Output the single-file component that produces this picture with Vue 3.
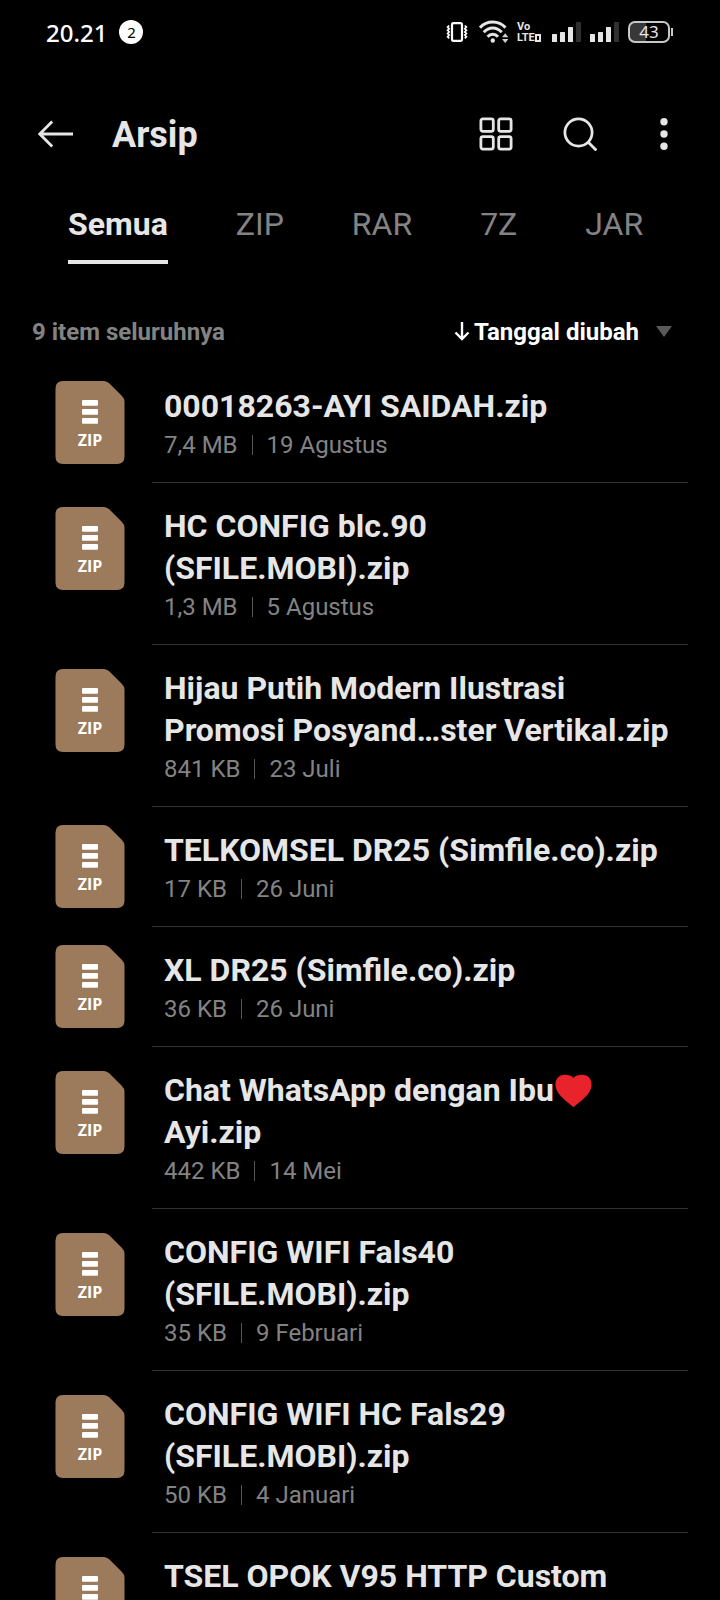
<script setup>
import { ref } from 'vue'

const tabs = ['Semua', 'ZIP', 'RAR', '7Z', 'JAR']
const active = ref('Semua')

const files = [
  { name: '00018263-AYI SAIDAH.zip', size: '7,4 MB', date: '19 Agustus' },
  { name: 'HC CONFIG blc.90 (SFILE.MOBI).zip', size: '1,3 MB', date: '5 Agustus', tall: true },
  { name: 'Hijau Putih Modern Ilustrasi Promosi Posyand…ster Vertikal.zip', size: '841 KB', date: '23 Juli', tall: true },
  { name: 'TELKOMSEL DR25 (Simfile.co).zip', size: '17 KB', date: '26 Juni' },
  { name: 'XL DR25 (Simfile.co).zip', size: '36 KB', date: '26 Juni' },
  { name: 'Chat WhatsApp dengan Ibu', heart: true, rest: ' Ayi.zip', size: '442 KB', date: '14 Mei', tall: true },
  { name: 'CONFIG WIFI Fals40 (SFILE.MOBI).zip', size: '35 KB', date: '9 Februari', tall: true },
  { name: 'CONFIG WIFI HC Fals29 (SFILE.MOBI).zip', size: '50 KB', date: '4 Januari', tall: true },
  { name: 'TSEL OPOK V95 HTTP Custom', tall: true },
]
</script>

<template>
  <div class="screen">
    <div class="status">
      <span class="time">20.21</span>
      <span class="badge">2</span>
      <div class="indicators">
        <svg class="vibrate" width="22" height="20" viewBox="0 0 22 20" fill="none" stroke="#fff">
          <rect x="6" y="1.2" width="10" height="17.6" rx="1.5" stroke-width="2.2" />
          <path d="M3.2 3.500l-1.600 1.600 1.600 1.600-1.600 1.600 1.600 1.600-1.600 1.600 1.600 1.600-1.600 1.600 1.600 1.600M18.800 3.500l1.600 1.600-1.600 1.600 1.600 1.600-1.600 1.600 1.600 1.600-1.600 1.600 1.600 1.600-1.600 1.600" stroke-width="1.700" />
        </svg>
        <svg class="wifi" width="30" height="24" viewBox="0 0 30 24" fill="none" stroke="#e6e6e6" stroke-width="3">
          <path d="M1 7.600C8 .2 19.500 .2 26.500 7.600M4.800 12.300C10 6.700 17.500 6.700 22.700 12.300M8.600 16.800C11.500 13.300 16 13.300 19 16.800" />
          <circle cx="13.800" cy="20.500" r="2.200" fill="#e6e6e6" stroke="none" />
          <path d="M26.200 13.200l3.200 4h-6.400zM26.200 23l3.200-4h-6.400z" fill="#d0d0d0" stroke="none" />
        </svg>
        <span class="volte">
          <span>Vo</span>
          <span class="lte">LTE<i class="box"></i></span>
        </span>
        <svg v-for="n in 2" :key="n" class="signal" width="30" height="20" viewBox="0 0 30 20" fill="#e6e6e6">
          <rect x="0" y="12" width="5" height="8" rx=".5" />
          <rect x="8" y="10" width="5" height="10" rx=".5" />
          <rect x="16" y="5" width="5" height="15" rx=".5" />
          <rect x="24" y="0" width="5" height="20" rx=".5" fill="#303030" />
        </svg>
        <span class="battery">43</span>
        <i class="nub"></i>
      </div>
    </div>

    <header class="bar">
      <button class="icon" aria-label="Kembali">
        <svg width="36" height="28" viewBox="0 0 36 28" fill="none" stroke="#e6e6e6" stroke-width="2.8">
          <path d="M35 14H2M14.200 1.500L1.800 14l12.400 12.500" />
        </svg>
      </button>
      <h1>Arsip</h1>
      <button class="icon" aria-label="Tampilan kisi">
        <svg width="34" height="34" viewBox="0 0 34 34" fill="none" stroke="#e6e6e6" stroke-width="2.800">
          <rect x="1.900" y="1.900" width="12.400" height="12.400" rx="2" />
          <rect x="19.700" y="1.900" width="12.400" height="12.400" rx="2" />
          <rect x="1.900" y="19.700" width="12.400" height="12.400" rx="2" />
          <rect x="19.700" y="19.700" width="12.400" height="12.400" rx="2" />
        </svg>
      </button>
      <button class="icon search" aria-label="Cari">
        <svg width="34" height="34" viewBox="0 0 34 34" fill="none" stroke="#e6e6e6" stroke-width="2.800">
          <circle cx="15.500" cy="15.500" r="13.600" />
          <path d="M25 25l8.400 8.400" />
        </svg>
      </button>
      <button class="icon more" aria-label="Lainnya">
        <svg width="8" height="34" viewBox="0 0 8 34" fill="#e6e6e6">
          <circle cx="4" cy="4.800" r="3.700" />
          <circle cx="4" cy="17" r="3.700" />
          <circle cx="4" cy="29.200" r="3.700" />
        </svg>
      </button>
    </header>

    <nav class="tabs">
      <button v-for="t in tabs" :key="t" :class="{ active: t === active }" @click="active = t">{{ t }}</button>
    </nav>

    <div class="summary">
      <span class="count">9 item seluruhnya</span>
      <button class="sort">
        <svg width="16" height="20" viewBox="0 0 16 20" fill="none" stroke="#fff" stroke-width="2.400">
          <path d="M8 0v16.500M1.500 10.500L8 17l6.500-6.500" />
        </svg>
        <span>Tanggal diubah</span>
        <svg class="caret" width="16" height="12" viewBox="0 0 16 12"><path d="M0 0h16L8 11z" fill="#5a5a5a" /></svg>
      </button>
    </div>

    <ul class="files">
      <li v-for="f in files" :key="f.name" :class="{ tall: f.tall }">
        <div class="thumb">
          <svg width="70" height="84" viewBox="0 0 70 84">
            <path d="M8 0H49Q52 0 54.500 2.500L66.500 14.500Q69.500 17.500 69.500 20.500V75.500Q69.500 83 62 83H8Q.5 83 .5 75.500V7.500Q.5 0 8 0z" fill="#9b7b5c" />
            <g fill="#fff">
              <rect x="27" y="19" width="16" height="5.800" rx="1" />
              <rect x="27" y="28" width="16" height="5.800" rx="1" />
              <rect x="27" y="37" width="16" height="5.800" rx="1" />
            </g>
            <text x="35" y="64.500" text-anchor="middle" fill="#fff" class="ext">ZIP</text>
          </svg>
        </div>
        <div class="info">
          <div class="name">{{ f.name }}<svg v-if="f.heart" class="heart" role="img" aria-label="hati" width="38" height="34" viewBox="0 0 38 34"><path d="M19.500 33.500C17 30 4 23 1.800 13.500C.2 6 4.500 .8 10.500 .8C14.500 .8 18 2 19.500 4C21 2 24.500 .8 28.500 .8C34.500 .8 38.800 6 37.200 13.500C35 23 22 30 19.500 33.500z" fill="#e8232b" /></svg>{{ f.rest }}</div>
          <div v-if="f.size" class="meta"><span>{{ f.size }}</span><i></i><span>{{ f.date }}</span></div>
        </div>
      </li>
    </ul>
  </div>
</template>

<style>
body {
  background: #000;
}
</style>

<style scoped>
.screen {
  display: flex;
  flex-direction: column;
  height: 100vh;
  overflow: hidden;
  background: #000;
  color: #e6e6e6;
  font-family: Roboto, sans-serif;
}
button {
  padding: 0;
  border: 0;
  background: none;
  color: inherit;
  font: inherit;
  cursor: pointer;
}
svg {
  display: block;
}
.status {
  flex: none;
  display: flex;
  align-items: center;
  height: 64px;
  padding: 0 47px 0 46px;
  color: #fff;
  font-family: "Noto Sans", sans-serif;
}
.time {
  font-size: 24px;
  font-weight: 500;
}
.badge {
  width: 24px;
  margin-left: 12px;
  border-radius: 50%;
  background: #fff;
  color: #000;
  font-size: 15px;
  line-height: 24px;
  text-align: center;
}
.indicators {
  display: flex;
  align-items: center;
  margin-left: auto;
}
.wifi {
  margin-left: 11px;
}
.volte {
  display: flex;
  flex-direction: column;
  width: 24px;
  margin: 0 11px 0 8px;
  color: #e6e6e6;
  font: bold 11px/11px "Liberation Sans Narrow", Roboto, sans-serif;
}
.lte {
  display: flex;
  align-items: center;
}
.box {
  flex: none;
  box-sizing: border-box;
  width: 6px;
  height: 8px;
  border: 2px solid #e6e6e6;
}
.signal {
  margin-right: 8px;
}
.battery {
  box-sizing: border-box;
  width: 42px;
  height: 22px;
  border: 2px solid #c8c8c8;
  border-radius: 7px;
  background: linear-gradient(90deg, #383838 43%, transparent 43%);
  color: #e6e6e6;
  font-size: 17px;
  line-height: 18px;
  text-align: center;
}
.nub {
  width: 2px;
  height: 8px;
  margin-left: 1px;
  background: #c8c8c8;
}
.bar {
  flex: none;
  display: flex;
  align-items: center;
  height: 80px;
  margin-top: 30px;
  padding: 0 52px 0 38px;
}
h1 {
  flex: 1;
  margin: 2px 0 0 38px;
  font-size: 36px;
  line-height: 44px;
  font-weight: 700;
}
.search {
  margin-left: 50px;
}
.more {
  margin-left: 63px;
}
.tabs {
  flex: none;
  display: flex;
  gap: 68px;
  margin-top: 30px;
  padding: 0 68px;
}
.tabs button {
  padding-bottom: 16px;
  border-bottom: 4px solid transparent;
  color: #838383;
  font-size: 32px;
  line-height: 40px;
}
.tabs .active {
  border-color: #e6e6e6;
  color: #e6e6e6;
  font-weight: 700;
}
.summary {
  flex: none;
  display: flex;
  align-items: center;
  justify-content: space-between;
  margin: 54px 48px 17px 32px;
  font-size: 24px;
  line-height: 28px;
}
.count {
  color: #838383;
  font-weight: 700;
}
.sort {
  display: flex;
  align-items: center;
  gap: 4px;
  color: #fff;
  font-weight: 700;
}
.caret {
  margin-left: 13px;
}
.files {
  flex: 1;
  min-height: 0;
  overflow: hidden;
  margin: 0;
  padding: 0;
  list-style: none;
}
li {
  display: flex;
  align-items: flex-start;
  padding: 0 32px 0 55px;
}
.thumb {
  padding-top: 18px;
}
.tall .thumb {
  padding-top: 24px;
}
.ext {
  font: 700 16px "Open Sans", sans-serif;
}
.info {
  flex: 1;
  margin-left: 27px;
  padding: 22px 16px 23px 12px;
  border-bottom: 1px solid #333;
}
.name {
  font-size: 32px;
  line-height: 42px;
  font-weight: 700;
}
.heart {
  display: inline-block;
  height: 34px;
  margin: -4px 0;
  vertical-align: -3px;
}
.meta {
  display: flex;
  align-items: center;
  margin-top: 4px;
  color: #838383;
  font-size: 24px;
  line-height: 28px;
}
.meta i {
  width: 1px;
  height: 20px;
  margin: 0 14px;
  background: #555;
}
</style>
